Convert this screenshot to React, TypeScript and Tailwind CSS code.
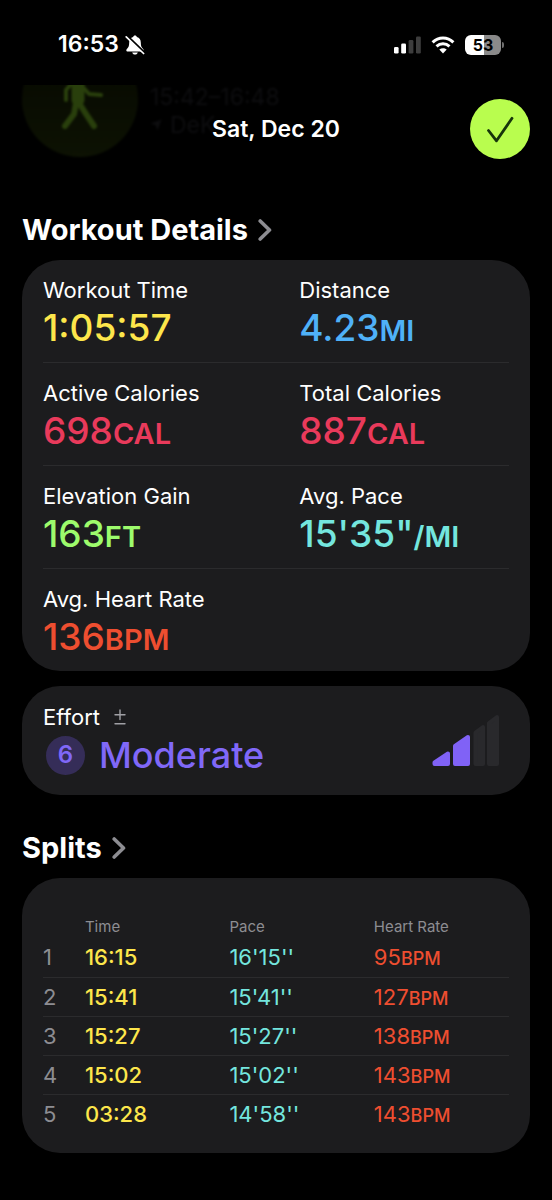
import type { ReactNode } from "react";

type Metric = { label: string; value: string; unit?: string; color: string };

const METRIC_ROWS: Metric[][] = [
  [
    { label: "Workout Time", value: "1:05:57", color: "text-[#fde64b]" },
    { label: "Distance", value: "4.23", unit: "MI", color: "text-[#4fb1f8]" },
  ],
  [
    { label: "Active Calories", value: "698", unit: "CAL", color: "text-[#e93a5b]" },
    { label: "Total Calories", value: "887", unit: "CAL", color: "text-[#e93a5b]" },
  ],
  [
    { label: "Elevation Gain", value: "163", unit: "FT", color: "text-[#9dfb6c]" },
    { label: "Avg. Pace", value: "15'35\"", unit: "/MI", color: "text-[#74e6de]" },
  ],
  [{ label: "Avg. Heart Rate", value: "136", unit: "BPM", color: "text-[#ee4e30]" }],
];

const SPLITS = [
  { time: "16:15", pace: "16'15''", bpm: 95 },
  { time: "15:41", pace: "15'41''", bpm: 127 },
  { time: "15:27", pace: "15'27''", bpm: 138 },
  { time: "15:02", pace: "15'02''", bpm: 143 },
  { time: "03:28", pace: "14'58''", bpm: 143 },
];

function BellOff() {
  return (
    <svg width="20" height="20" viewBox="0 0 20 20" aria-hidden="true">
      <path
        d="M10 .6c-1 0-1.700.6-1.900 1.500C5.500 2.900 4.200 4.900 4.200 7.600c0 3.200-.6 4.600-1.700 5.700-.7.700-1.200 1.200-1.200 1.900 0 .8.600 1.300 1.500 1.300h14.400c.9 0 1.500-.5 1.500-1.300 0-.7-.5-1.200-1.200-1.900-1.100-1.100-1.700-2.500-1.700-5.700 0-2.700-1.300-4.700-3.900-5.500C11.700 1.200 11 .6 10 .6z"
        fill="#fff"
      />
      <path d="M7.200 17.500h5.600c-.3 1.300-1.400 2.100-2.800 2.100s-2.500-.8-2.800-2.100z" fill="#fff" />
      <path d="M1.800 .8l18 17.200" stroke="#000" strokeWidth="2.600" />
      <path d="M1.200 1.800l17.400 16.700" stroke="#fff" strokeWidth="1.700" strokeLinecap="round" />
    </svg>
  );
}

function Signal() {
  return (
    <svg width="27" height="18" viewBox="0 0 27 18" aria-hidden="true">
      <rect x="0" y="11" width="4.600" height="6.500" rx="1.300" fill="#fff" />
      <rect x="7.200" y="7.500" width="4.800" height="10" rx="1.300" fill="#fff" />
      <rect x="14.600" y="4" width="4.800" height="13.500" rx="1.300" fill="#3d3d3d" />
      <rect x="22" y=".5" width="4.800" height="17" rx="1.300" fill="#3d3d3d" />
    </svg>
  );
}

function Wifi() {
  return (
    <svg width="24" height="18" viewBox="0 0 24 18" fill="none" stroke="#fff" aria-hidden="true">
      <path d="M1.600 6.300c5.900-5.700 14.900-5.700 20.800 0" strokeWidth="3" />
      <path d="M5.500 10.400c3.700-3.500 9.300-3.500 13 0" strokeWidth="2.900" />
      <path d="M12 17.400l-3.700-3.800c2.200-1.900 5.200-1.900 7.400 0z" fill="#fff" stroke="none" />
    </svg>
  );
}

function Battery() {
  return (
    <div className="flex items-center gap-px">
      <div className="flex h-5 w-9 items-center justify-center rounded-md bg-linear-to-r from-white from-53% to-[#8a8a8a] to-53% text-base font-bold text-black">
        53
      </div>
      <div className="h-1.5 w-0.5 rounded-r-full bg-[#6e6e6e]" />
    </div>
  );
}

function StatusBar() {
  return (
    <div className="flex h-[85px] items-center justify-between pr-12 pb-1 pl-[58px]">
      <div className="flex items-center gap-1.5 pt-2">
        <span className="text-[23px] font-semibold text-white">16:53</span>
        <BellOff />
      </div>
      <div className="flex items-center gap-2.5 pt-2">
        <Signal />
        <Wifi />
        <Battery />
      </div>
    </div>
  );
}

// Summary that has scrolled away under the title bar
function ScrolledSummary() {
  return (
    <div className="absolute inset-0 overflow-hidden" aria-hidden="true">
      <div className="flex gap-3 pl-[22px] blur-[1px]">
        <div className="-mt-11 size-29 shrink-0 rounded-full bg-linear-to-b from-[#060801] to-[#0d1203]">
          <svg width="116" height="116" viewBox="0 0 116 116" fill="none" stroke="#293f0c" strokeLinecap="round" strokeLinejoin="round">
            <path d="M56 36v23" strokeWidth="13" />
            <path d="M50 42l-6 7v10M60 45l7 8 12 1" strokeWidth="4" />
            <path d="M54 62l-2 11-9 12M57 62l7 11 8 12" strokeWidth="6" />
          </svg>
        </div>
        <div className="text-[23px] leading-6 text-[#0d0d0f]">
          <p>15:42–16:48</p>
          <p className="mt-1 flex items-center gap-2">
            <svg width="12" height="12" viewBox="0 0 12 12" fill="#0d0d0f">
              <path d="M11.500.5L7.500 11.500 5.800 6.200.5 4.500z" />
            </svg>
            DeK
          </p>
        </div>
      </div>
    </div>
  );
}

function Header() {
  return (
    <header className="relative px-[22px] pt-3.5">
      <ScrolledSummary />
      <div className="relative grid grid-cols-[1fr_auto_1fr] items-center">
        <h1 className="col-start-2 text-[23px] font-semibold text-white">Sat, Dec 20</h1>
        <button
          type="button"
          aria-label="Done"
          className="flex size-15 items-center justify-center justify-self-end rounded-full bg-[#b9fd4e]"
        >
          <svg width="28" height="28" viewBox="0 0 28 28" fill="none" stroke="#16350b" strokeWidth="2.800" strokeLinecap="round" strokeLinejoin="round">
            <path d="M2.500 15.500l8 10.300L26 3.300" />
          </svg>
        </button>
      </div>
    </header>
  );
}

function SectionLink({ children }: { children: ReactNode }) {
  return (
    <h2 className="text-[29px] leading-9 font-bold text-white">
      <a href="#" className="inline-flex items-center gap-2.5">
        {children}
        <svg width="14" height="22" viewBox="0 0 14 22" fill="none" stroke="#8d8d92" strokeWidth="3.600" strokeLinecap="round" strokeLinejoin="round" aria-hidden="true">
          <path d="M2.200 2l9.300 9-9.300 9" />
        </svg>
      </a>
    </h2>
  );
}

function MetricCell({ metric }: { metric: Metric }) {
  return (
    <div>
      <dt className="text-[22px] leading-7 text-white">{metric.label}</dt>
      <dd className={`text-[37px] leading-12 font-medium ${metric.color}`}>
        {metric.value}
        {metric.unit && <span className="text-[29px] leading-none font-semibold">{metric.unit}</span>}
      </dd>
    </div>
  );
}

function DetailsCard() {
  return (
    <dl className="mt-3 rounded-[38px] bg-[#1c1c1e] px-[21px]">
      {METRIC_ROWS.map((row) => (
        <div
          key={row[0].label}
          className="grid grid-cols-[11fr_9fr] border-b border-[#2b2b2d] pt-4 pb-2.5 last:border-b-0"
        >
          {row.map((metric) => (
            <MetricCell key={metric.label} metric={metric} />
          ))}
        </div>
      ))}
    </dl>
  );
}

function EffortCard() {
  return (
    <section className="mt-[15px] flex items-center justify-between rounded-[38px] bg-[#1c1c1e] pt-[17px] pr-[30px] pb-4 pl-[21px]">
      <div>
        <h3 className="flex items-center gap-3.5 text-[22px] leading-7 text-white">
          Effort
          <svg width="12" height="16" viewBox="0 0 12 16" stroke="#a0a0a5" strokeWidth="1.400" strokeLinecap="round" aria-hidden="true">
            <path d="M6 1v9.500M1 5.700h10M1 14.800h10" />
          </svg>
        </h3>
        <div className="flex h-12 items-center gap-3.5 pl-[3px]">
          <span className="flex size-[39px] items-center justify-center rounded-full bg-[#352d58] text-2xl font-semibold text-[#8068f8]">
            6
          </span>
          <span className="text-4xl font-medium text-[#8068f8]">Moderate</span>
        </div>
      </div>
      <svg width="68" height="54" viewBox="0 0 68 54" strokeWidth="4" strokeLinejoin="round" aria-hidden="true">
        <g fill="#8062f6" stroke="#8062f6">
          <path d="M2.500 50h13.500V39.500L2.500 48.500z" />
          <path d="M23 50h13V23L23 32z" />
        </g>
        <g fill="#29292c" stroke="#29292c">
          <path d="M43.500 50h7.500V13L43.500 18.500z" />
          <path d="M57 50H65V3L57 9z" />
        </g>
      </svg>
    </section>
  );
}

function SplitsCard() {
  return (
    <div className="mt-3 rounded-[38px] bg-[#1c1c1e] px-[21px] pt-[38px] pb-5">
      <table className="w-full table-fixed border-collapse text-left text-[22px] leading-7">
        <thead>
          <tr className="h-[22px] text-[15px] leading-5 text-[#8d8d92]">
            <th className="w-[9%] p-0 font-normal" aria-label="Split" />
            <th className="w-[31%] p-0 font-normal">Time</th>
            <th className="w-[31%] p-0 font-normal">Pace</th>
            <th className="p-0 font-normal">Heart Rate</th>
          </tr>
        </thead>
        <tbody>
          {SPLITS.map((split, i) => (
            <tr key={i} className="h-[39px] border-b border-[#2b2b2d] last:border-b-0">
              <td className="p-0 text-[#8d8d92]">{i + 1}</td>
              <td className="p-0 font-medium text-[#fde64b]">{split.time}</td>
              <td className="p-0 text-[#74e6de]">{split.pace}</td>
              <td className="p-0 text-[#ee4e30]">
                {split.bpm}
                <span className="text-[18px] leading-none font-medium">BPM</span>
              </td>
            </tr>
          ))}
        </tbody>
      </table>
    </div>
  );
}

export default function App() {
  return (
    <div className="min-h-screen bg-black pb-11 font-['Inter',sans-serif]">
      <StatusBar />
      <Header />
      <main className="px-[22px] pt-[53px]">
        <SectionLink>Workout Details</SectionLink>
        <DetailsCard />
        <EffortCard />
        <div className="pt-[35px]">
          <SectionLink>Splits</SectionLink>
        </div>
        <SplitsCard />
      </main>
    </div>
  );
}
